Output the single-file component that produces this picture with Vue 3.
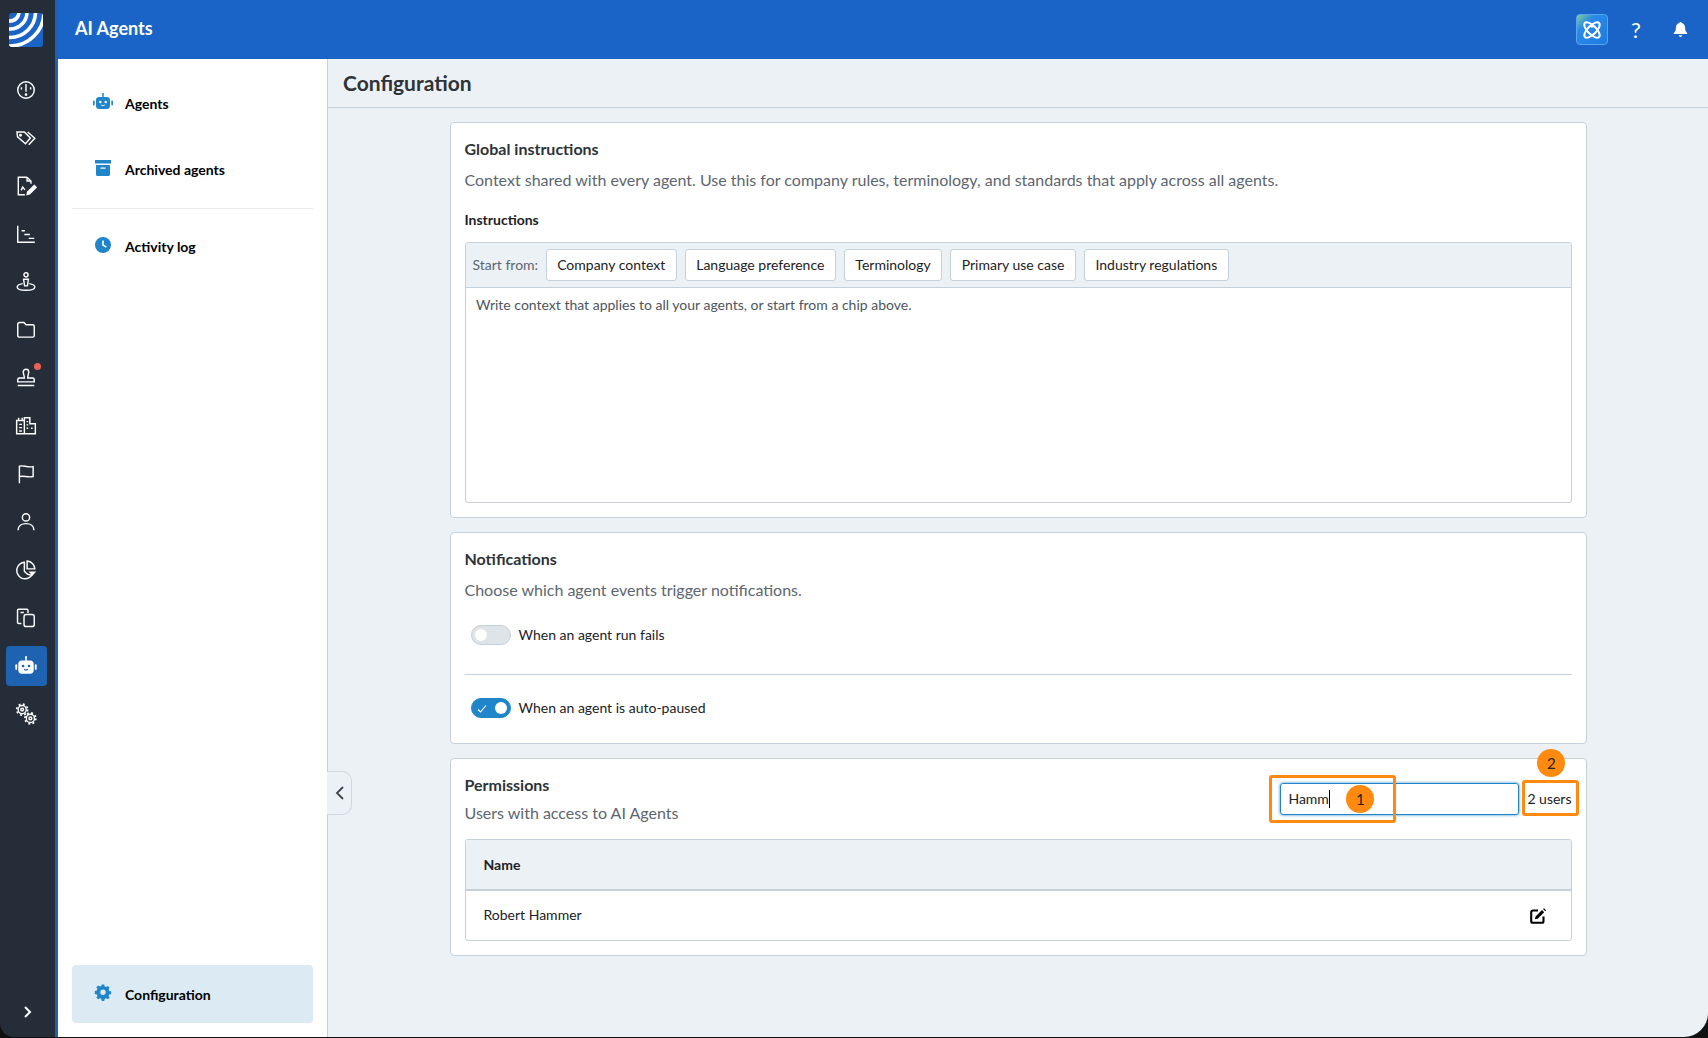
<script setup>
const chips = ['Company context', 'Language preference', 'Terminology', 'Primary use case', 'Industry regulations']
</script>

<template>
  <div class="frame">
    <div class="window">
      <aside class="rail">
        <div class="logo">
          <svg class="logo-mark" width="34" height="34" viewBox="0 0 34 34">
            <rect width="34" height="34" fill="#1a64c8" />
            <g fill="none" stroke="#fff" stroke-width="3.600">
              <circle cx="1" cy="-1" r="9" />
              <circle cx="1" cy="-1" r="17" />
              <circle cx="1" cy="-1" r="25.500" />
              <circle cx="1" cy="-1" r="34" />
            </g>
          </svg>
        </div>
        <nav class="rail-nav">
          <a class="rail-item">
            <svg viewBox="0 0 20 20"><circle cx="10" cy="10" r="7.500" /><path d="M10 4.500v7M5.800 7.500v2M14.200 7.500v2" /><circle cx="10" cy="14.200" r=".6" /></svg>
          </a>
          <a class="rail-item">
            <svg viewBox="0 0 20 20"><path d="M1.800 4.500h6.700l5.500 5.500-4.500 5.200-7.200-6.200zM11.500 4.500l6.500 5.700-5.500 6" /><circle cx="5" cy="7.500" r=".7" /></svg>
          </a>
          <a class="rail-item">
            <svg viewBox="0 0 20 20"><path d="M11 2H3v16h6M11 2l3.500 3.500v2.500M11 2v3.500h3.500M5.500 14l1.500-3 2 2.500" /><path d="M11.500 15.500l6-6 1.700 1.700-6 6-2.200 .5z" fill="#fff" /></svg>
          </a>
          <a class="rail-item">
            <svg viewBox="0 0 20 20"><path d="M2.500 2.500v15h15.500M6 7h3M8.500 10.500h5M12.500 14h5" /></svg>
          </a>
          <a class="rail-item">
            <svg viewBox="0 0 20 20"><circle cx="10" cy="3.500" r="1.900" /><path d="M7.800 7.500h4.400l-.9 6H8.700zM7 11.500c-3 .5-5 1.700-5 3 0 1.800 3.500 3 8 3s8-1.200 8-3c0-1.300-2-2.500-5-3" /></svg>
          </a>
          <a class="rail-item">
            <svg viewBox="0 0 20 20"><path d="M2.500 4.800c0-.9.700-1.600 1.600-1.600h4L10 5.200h6c.9 0 1.500.7 1.500 1.500v8.200c0 .9-.6 1.600-1.500 1.600H4.100c-.9 0-1.600-.7-1.600-1.600z" /></svg>
          </a>
          <a class="rail-item dot">
            <svg viewBox="0 0 20 20"><path d="M7.500 4.500a2.500 2.500 0 0 1 5 0c0 2-1 3-1 5.500h4.500c1 0 1.500.7 1.500 1.500V13.500H2.500v-2c0-.8.500-1.500 1.500-1.500h4.500c0-2.500-1-3.500-1-5.500zM2.500 16.800h15" /></svg>
          </a>
          <a class="rail-item">
            <svg viewBox="0 0 20 20"><path d="M1.500 17V5h7v12zM8.500 17V2.500h5V8h5v9zM1.500 17h17M3.300 5V2.500M6.500 5V2.500" /><path d="M3.800 8.500h2.500M3.800 11.500h2.500M3.800 14.500h2.500M10.500 6h1.500M10.500 9h1.500M10.500 12h1.500M14.500 12h1.500" /></svg>
          </a>
          <a class="rail-item">
            <svg viewBox="0 0 20 20"><path d="M4 18.500V2.800c4-1 6.500 1.500 12.500 .5v9c-5 1.200-8.500-1.200-12.500 0" /></svg>
          </a>
          <a class="rail-item">
            <svg viewBox="0 0 20 20"><circle cx="10" cy="5.800" r="3.300" /><path d="M2.800 17.500c0-3.800 3-6 7.200-6s7.200 2.200 7.200 6" /></svg>
          </a>
          <a class="rail-item">
            <svg viewBox="0 0 20 20"><path d="M8.500 3a7.500 7.500 0 1 0 7 11.500 8 8 0 0 1-7-3.500z" /><path d="M11 1.800a7.500 7.500 0 0 1 7 7.200h-7z" /><path d="M12.300 11.300h7l-3.500 4z" fill="#fff" stroke="none" /></svg>
          </a>
          <a class="rail-item">
            <svg viewBox="0 0 20 20"><path d="M5.800 15H3.300c-.6 0-1-.4-1-1V3c0-.6.400-1 1-1h7.500c.6 0 1 .4 1 1v2.500M5 5h3" /><rect x="8.200" y="6.800" width="9.300" height="11" rx="2" /></svg>
          </a>
          <a class="rail-item active">
            <svg viewBox="0 0 20 20" class="solid"><path d="M10 1a1 1 0 0 1 .7 1.700V5H14c1.700 0 3 1.300 3 3v6c0 1.700-1.300 3-3 3H6c-1.700 0-3-1.300-3-3V8c0-1.700 1.300-3 3-3h3.300V2.700A1 1 0 0 1 10 1z" /><rect x=".3" y="8.500" width="1.700" height="5" rx=".8" /><rect x="18" y="8.500" width="1.700" height="5" rx=".8" /><circle cx="7.300" cy="10" r="1.200" fill="#1e62b2" /><circle cx="12.700" cy="10" r="1.200" fill="#1e62b2" /><path d="M8.300 13c1 .8 2.400 .8 3.400 0" fill="none" stroke="#1e62b2" stroke-width="1" /></svg>
          </a>
          <a class="rail-item">
            <svg viewBox="0 0 20 20"><circle cx="6.500" cy="6" r="3.700" /><circle cx="6.500" cy="6" r="5" stroke-width="1.500" stroke-dasharray="1.800 2.130" /><circle cx="6.500" cy="6" r="1.300" /><circle cx="14" cy="14" r="3.700" /><circle cx="14" cy="14" r="5" stroke-width="1.500" stroke-dasharray="1.800 2.130" /><circle cx="14" cy="14" r="1.300" /></svg>
          </a>
        </nav>
        <a class="rail-expand">
          <svg width="14" height="14" viewBox="0 0 14 14"><path d="M5 2l5 5-5 5" fill="none" stroke="#fff" stroke-width="2" /></svg>
        </a>
      </aside>

      <div class="main">
        <header class="topbar">
          <span class="app-title">AI Agents</span>
          <div class="top-actions">
            <span class="spark">
              <svg width="22" height="22" viewBox="0 0 22 22" fill="none" stroke="#fff" stroke-width="2">
                <ellipse cx="11" cy="11" rx="10" ry="4.300" transform="rotate(45 11 11)" />
                <ellipse cx="11" cy="11" rx="10" ry="4.300" transform="rotate(-45 11 11)" />
                <rect x="9.500" y="5.500" width="3" height="3" fill="#fff" stroke="none" />
              </svg>
            </span>
            <span class="help">?</span>
            <svg class="bell" width="15" height="17" viewBox="0 0 18 20" fill="#fff">
              <path d="M9 1c.8 0 1.300.5 1.300 1.200C13 2.800 14.500 5 14.500 8c0 3 .8 4.500 2.500 6.300.4.500 0 1.200-.6 1.200H1.600c-.6 0-1-.7-.6-1.200C2.700 12.500 3.500 11 3.500 8c0-3 1.500-5.200 4.200-5.800C7.700 1.500 8.200 1 9 1zM7 17h4c0 1-1 2-2 2s-2-1-2-2z" />
            </svg>
          </div>
        </header>

        <div class="body">
          <aside class="subnav">
            <div class="sub-group">
              <a class="sub-item first">
                <svg viewBox="0 0 20 20" class="sub-icon"><path d="M10 1a1 1 0 0 1 .7 1.700V5H14c1.700 0 3 1.300 3 3v6c0 1.700-1.300 3-3 3H6c-1.700 0-3-1.300-3-3V8c0-1.700 1.300-3 3-3h3.300V2.700A1 1 0 0 1 10 1z" /><rect x="0" y="8.500" width="1.700" height="5" rx=".8" /><rect x="18.300" y="8.500" width="1.700" height="5" rx=".8" /><circle cx="7.300" cy="10" r="1.200" fill="#fff" /><circle cx="12.700" cy="10" r="1.200" fill="#fff" /><path d="M8.300 13c1 .8 2.400 .8 3.400 0" fill="none" stroke="#fff" stroke-width="1" /></svg>
                <span>Agents</span>
              </a>
              <a class="sub-item second">
                <svg viewBox="0 0 20 20" class="sub-icon"><path d="M2 2h16v3.500H2zM3 7h14v9.500c0 .8-.7 1.500-1.500 1.500h-11c-.8 0-1.500-.7-1.500-1.500zM7.500 9.500v1.200h5V9.500z" fill-rule="evenodd" /></svg>
                <span>Archived agents</span>
              </a>
              <div class="sub-sep"></div>
              <a class="sub-item third">
                <svg viewBox="0 0 20 20" class="sub-icon"><path d="M10 2a8 8 0 1 1 0 16 8 8 0 0 1 0-16zM9.200 5.500V10.500l3.800 2.300.8-1.300-3-1.800V5.500z" fill-rule="evenodd" /></svg>
                <span>Activity log</span>
              </a>
            </div>
            <a class="sub-item config">
              <svg viewBox="0 0 20 20" class="sub-icon"><path d="M8.800 2.500h2.400l.5 2 1.400.6 1.800-1 1.700 1.700-1 1.800.6 1.400 2 .5v2.400l-2 .5-.6 1.400 1 1.800-1.700 1.700-1.800-1-1.400.6-.5 2H8.800l-.5-2-1.400-.6-1.800 1-1.700-1.700 1-1.800-.6-1.400-2-.5V9l2-.5.6-1.400-1-1.800 1.700-1.700 1.800 1 1.400-.6zM10 7.500a2.700 2.700 0 1 0 0 5.400 2.700 2.700 0 0 0 0-5.400z" fill-rule="evenodd" /></svg>
              <span>Configuration</span>
            </a>
            <button class="collapse">
              <svg width="12" height="18" viewBox="0 0 12 18"><path d="M9 3L3 9l6 6" fill="none" stroke="#3b4450" stroke-width="1.800" /></svg>
            </button>
          </aside>

          <main class="content">
            <h1 class="page-title">Configuration</h1>
            <div class="cards">
              <section class="card global">
                <h2>Global instructions</h2>
                <p class="desc">Context shared with every agent. Use this for company rules, terminology, and standards that apply across all agents.</p>
                <h3>Instructions</h3>
                <div class="editor">
                  <div class="toolbar">
                    <span class="start">Start from:</span>
                    <button v-for="chip in chips" :key="chip" class="chip">{{ chip }}</button>
                  </div>
                  <div class="editor-text">Write context that applies to all your agents, or start from a chip above.</div>
                </div>
              </section>

              <section class="card notif">
                <h2>Notifications</h2>
                <p class="desc">Choose which agent events trigger notifications.</p>
                <div class="toggle-row first-row">
                  <span class="toggle"><i></i></span>
                  <span class="toggle-label">When an agent run fails</span>
                </div>
                <div class="row-sep"></div>
                <div class="toggle-row">
                  <span class="toggle on">
                    <svg width="10" height="10" viewBox="0 0 10 10"><path d="M1 5.500l2.500 2.500L9 1.500" fill="none" stroke="#fff" stroke-width="1.100" /></svg>
                    <i></i>
                  </span>
                  <span class="toggle-label">When an agent is auto-paused</span>
                </div>
              </section>

              <section class="card perms">
                <div class="perm-head">
                  <div>
                    <h2>Permissions</h2>
                    <p class="desc">Users with access to AI Agents</p>
                  </div>
                  <div class="search">
                    <div class="input">Hamm<span class="caret"></span></div>
                    <span class="count">2 users</span>
                    <span class="hl hl-1"></span>
                    <span class="hl hl-2"></span>
                    <span class="badge b-1">1</span>
                    <span class="badge b-2">2</span>
                  </div>
                </div>
                <div class="table">
                  <div class="t-head">Name</div>
                  <div class="t-row">
                    <span class="row-name">Robert Hammer</span>
                    <svg width="18" height="18" viewBox="0 0 18 18"><path d="M9 3.500H3.800C3 3.500 2.200 4.200 2.200 5v9.200c0 .8.800 1.500 1.600 1.500H13c.8 0 1.500-.7 1.500-1.500V9.500" fill="none" stroke="#000" stroke-width="2.100" /><path d="M6.500 9.500L13 3l2.200 2.200-6.500 6.500-2.800.6zM14 2l1-.8 2 2-.8 1z" fill="#000" /></svg>
                  </div>
                </div>
              </section>
            </div>
          </main>
        </div>
      </div>
    </div>
  </div>
</template>

<style>
html, body { margin: 0; background: #1b1b1b; }
</style>

<style scoped>
* { box-sizing: border-box; }
.frame { width: 1708px; height: 1038px; padding-bottom: 1px; background: #111; overflow: hidden; font-family: Lato, "Liberation Sans", sans-serif; color: #000; }
.window { display: flex; height: 1037px; overflow: hidden; border-radius: 0 0 24px 14px; }
.rail { width: 58px; flex: none; background: #252d38; border-right: 3px solid #1e62b2; padding-right: 3px; display: flex; flex-direction: column; align-items: center; }
.logo { height: 66px; padding-top: 13px; }
.logo-mark { display: block; border-radius: 3px; overflow: hidden; }
.rail-nav { display: flex; flex-direction: column; width: 100%; }
.rail-item { height: 48px; width: 100%; display: flex; align-items: center; justify-content: center; position: relative; }
.rail-item svg { width: 22px; height: 22px; fill: none; stroke: #fff; stroke-width: 1.300; position: relative; }
.rail-item svg.solid { fill: #fff; stroke: none; }
.rail-item.active::before { content: ""; position: absolute; left: 6px; top: 4px; width: 41px; height: 40px; border-radius: 4px; background: #1e62b2; }
.rail-item.dot::after { content: ""; position: absolute; left: 34px; top: 9px; width: 7px; height: 7px; border-radius: 50%; background: #ee6157; }
.rail-expand { margin-top: auto; margin-bottom: 18px; margin-left: 2px; display: flex; }
.main { flex: 1; display: flex; flex-direction: column; min-width: 0; }
.topbar { height: 59px; flex: none; background: #1a64c8; display: flex; align-items: center; justify-content: space-between; padding: 0 20px 0 17px; color: #fff; }
.app-title { font-size: 18px; font-weight: 700; padding-bottom: 3px; }
.top-actions { display: flex; align-items: center; }
.spark { width: 32px; height: 31px; border-radius: 4px; background: linear-gradient(135deg, #7ed08a 0%, #2b8ae8 30%, #1e7ae0 100%); border: 1px solid #5aa6f0; display: flex; align-items: center; justify-content: center; }
.help { width: 56px; text-align: center; font-size: 22px; line-height: 28px; color: #fff; }
.bell { margin-left: 9px; }
.body { flex: 1; display: flex; min-height: 0; }
.subnav { width: 270px; flex: none; background: #fff; border-right: 1px solid #c4d0dc; padding: 0 14px 14px; display: flex; flex-direction: column; position: relative; }
.sub-group { display: flex; flex-direction: column; }
.sub-item { display: flex; align-items: center; font-size: 14px; font-weight: 700; padding-left: 21px; color: #000; }
.sub-icon { width: 20px; height: 20px; fill: #2185c9; margin-right: 12px; position: relative; top: -1px; }
.first { height: 44px; margin-top: 22px; }
.second { height: 44px; margin-top: 22px; }
.sub-sep { height: 1px; background: #e8ebee; margin-top: 17px; }
.third { height: 44px; margin-top: 15px; }
.config { margin-top: auto; height: 58px; background: #dbeaf3; border-radius: 4px; }
.config .sub-icon { top: -2px; }
.collapse { position: absolute; left: 269px; top: 712px; width: 25px; height: 44px; padding: 0 0 0 1px; border: 1px solid #d0d9e2; border-left: 0; border-radius: 0 10px 10px 0; background: #ecf1f5; display: flex; align-items: center; justify-content: center; }
.content { flex: 1; background: #ecf1f5; display: flex; flex-direction: column; min-width: 0; }
.page-title { margin: 0; height: 49px; border-bottom: 1px solid #c4d0dc; font-size: 21px; font-weight: 700; color: #2d3339; padding: 12px 15px 0; line-height: 24px; }
.cards { width: 1137px; margin: 14px auto 0; display: flex; flex-direction: column; gap: 14px; }
.card { background: #fff; border: 1px solid #c4d0dc; border-radius: 4px; padding: 14px; }
.global { height: 396px; }
h2 { margin: 0; font-size: 16px; line-height: 24px; font-weight: 700; color: #2d3339; }
.desc { margin: 8px 0 0; font-size: 16px; line-height: 22px; color: #5c6670; }
h3 { margin: 18px 0 0; font-size: 14px; line-height: 22px; font-weight: 700; color: #1c2126; }
.editor { margin-top: 11px; height: 261px; border: 1px solid #c4d0dc; border-radius: 3px; overflow: hidden; }
.toolbar { height: 45px; background: #ecf1f5; border-bottom: 1px solid #c4d0dc; display: flex; align-items: center; padding: 0 0 1px 7px; gap: 8px; }
.start { font-size: 14px; color: #5c6670; margin-right: -0.500px; }
.chip { height: 32px; padding: 0 10.500px; background: #fff; border: 1px solid #c4d0dc; border-radius: 3px; font: 14px Lato, sans-serif; color: #1c2126; }
.editor-text { padding: 7px 10.500px; font-size: 14px; line-height: 20px; color: #4d5660; }
.notif { height: 212px; }
.toggle-row { display: flex; align-items: center; gap: 8px; font-size: 14px; height: 20px; margin-left: 6px; color: #1c2126; }
.toggle-label { padding-bottom: 2px; }
.first-row { margin-top: 24px; }
.row-sep { height: 1px; background: #c4d0dc; margin: 29px 0 23px; }
.toggle { width: 40px; height: 20px; border-radius: 10px; background: #dfe4e9; border: 1px solid #c4d0dc; position: relative; display: block; }
.toggle i { position: absolute; left: 3px; top: 3px; width: 12px; height: 12px; border-radius: 50%; background: #fff; }
.toggle.on { background: #2185c9; border-color: #2185c9; }
.toggle.on i { left: 23px; }
.toggle.on svg { position: absolute; left: 5px; top: 5px; }
.perms { height: 198px; }
.perm-head { display: flex; justify-content: space-between; align-items: flex-start; }
.perm-head .desc { margin-top: 5px; }
.search { display: flex; align-items: center; margin: 10px -1px 0 0; position: relative; }
.input { width: 239px; height: 32px; border: 1px solid #2185c9; border-radius: 3px; box-shadow: 0 0 3px #2185c9; font-size: 14px; line-height: 30px; padding-left: 7px; display: flex; align-items: center; color: #1c2126; }
.caret { width: 1px; height: 18px; background: #000; }
.count { font-size: 14px; margin: 0 1px 0 8px; padding-bottom: 1px; color: #1c2126; }
.hl { position: absolute; border: 3px solid #ff8a0f; border-radius: 3px; }
.hl-1 { left: -11px; top: -8px; width: 127px; height: 48px; }
.hl-2 { left: 242px; top: -3px; width: 57px; height: 36px; }
.badge { position: absolute; width: 28px; height: 28px; border-radius: 50%; background: #ff8a0f; font-size: 15px; color: #222; display: flex; align-items: center; justify-content: center; }
.b-1 { left: 66px; top: 2px; }
.b-2 { left: 257px; top: -34px; }
.table { margin-top: 15px; border: 1px solid #c4d0dc; border-radius: 3px; }
.t-head { height: 51px; background: #ecf1f5; border-bottom: 2px solid #c4d0dc; font-size: 14px; font-weight: 700; padding: 0 18px; display: flex; align-items: center; color: #1c2126; }
.t-row { height: 49px; padding: 0 24px 0 18px; display: flex; align-items: center; justify-content: space-between; font-size: 14px; color: #1c2126; }
.row-name { padding-bottom: 2px; }
</style>
